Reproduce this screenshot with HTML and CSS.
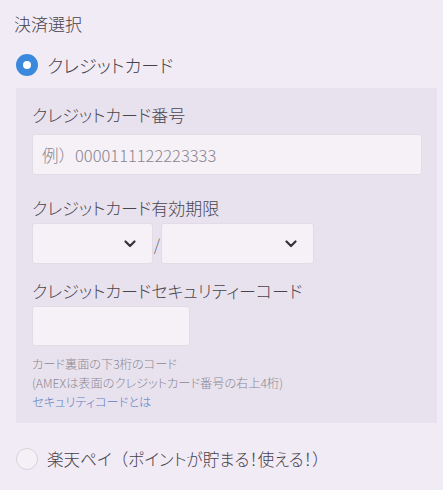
FILE: index.html
```html
<!DOCTYPE html>
<html lang="ja">
<head>
<meta charset="utf-8">
<link rel="stylesheet" href="styles.css">
</head>
<body>
<div class="page">
  <h2 class="title">決済選択</h2>
  <label class="radio-row">
    <span class="radio checked"></span>
    <span class="radio-text">クレジットカード</span>
  </label>
  <div class="panel">
    <div class="field-label">クレジットカード番号</div>
    <div class="input wide"><span class="placeholder">例）0000111122223333</span></div>

    <div class="field-label gap">クレジットカード有効期限</div>
    <div class="expiry">
      <div class="select month">
        <svg class="chev" width="12" height="8" viewBox="0 0 12 8"><path d="M1.5 1.5 L6 6 L10.5 1.5" fill="none" stroke="#35323a" stroke-width="2.2" stroke-linecap="round" stroke-linejoin="round"/></svg>
      </div>
      <span class="slash">/</span>
      <div class="select year">
        <svg class="chev" width="12" height="8" viewBox="0 0 12 8"><path d="M1.5 1.5 L6 6 L10.5 1.5" fill="none" stroke="#35323a" stroke-width="2.2" stroke-linecap="round" stroke-linejoin="round"/></svg>
      </div>
    </div>

    <div class="field-label gap2">クレジットカードセキュリティーコード</div>
    <div class="input short"></div>

    <div class="help">
      <div>カード裏面の下3桁のコード</div>
      <div>(AMEXは表面のクレジットカード番号の右上4桁)</div>
      <div class="link">セキュリティコードとは</div>
    </div>
  </div>
  <label class="radio-row second">
    <span class="radio"></span>
    <span class="radio-text small">楽天ペイ<span class="fw">（</span>ポイントが貯まる！使える！<span class="fw">）</span></span>
  </label>
</div>
</body>
</html>
```

FILE: styles.css
```css
html, body {
  margin: 0;
  padding: 0;
  background: #f1ebf5;
}
body {
  font-family: "Noto Sans CJK JP", "Noto Sans", sans-serif;
  font-feature-settings: "palt";
  font-weight: 300;
  color: #47434c;
  width: 443px;
  height: 490px;
  overflow: hidden;
}
.page {
  padding: 12px 6px 0 14px;
}
.title {
  margin: 0;
  font-size: 17px;
  font-weight: 300;
  line-height: 24px;
  color: #45414a;
}
.radio-row {
  display: flex;
  align-items: center;
  gap: 9px;
  margin-top: 16px;
  height: 26px;
}
.radio {
  width: 22px;
  height: 22px;
  border-radius: 50%;
  box-sizing: border-box;
  border: 1px solid #d8d2dc;
  background: #f4f0f6;
  flex: none;
  margin-left: 2px;
}
.radio.checked {
  border: 7px solid #3b89dd;
  background: #ffffff;
}
.radio-text {
  font-size: 18px;
  line-height: 26px;
  color: #45414a;
}
.radio-text.small {
  font-size: 16.6px;
}
.fw {
  font-feature-settings: normal;
}
.panel {
  margin: 10px 0 0 2px;
  width: 421px;
  box-sizing: border-box;
  background: #e8e2ee;
  padding: 15px 15px 11px 16px;
}
.field-label {
  font-size: 17px;
  line-height: 24px;
  color: #4a4650;
}
.field-label.gap { margin-top: 21px; }
.field-label.gap2 { margin-top: 15px; }
.input, .select {
  box-sizing: border-box;
  background: #f5f1f7;
  border: 1px solid #e2dce7;
  border-radius: 3px;
  height: 41px;
}
.input.wide {
  margin-top: 7px;
  width: 390px;
  display: flex;
  align-items: center;
  padding-left: 9px;
}
.placeholder {
  font-size: 16.5px;
  font-feature-settings: normal;
  color: #8a858f;
}
.input.short {
  margin-top: 3px;
  width: 158px;
  height: 40px;
}
.expiry {
  display: flex;
  align-items: center;
  margin-top: 3px;
}
.select {
  display: flex;
  align-items: center;
  justify-content: flex-end;
}
.select.month { width: 121px; padding-right: 16px; }
.select.year { width: 153px; padding-right: 16px; }
.slash {
  width: 8px;
  text-align: center;
  font-size: 16px;
  color: #6a6570;
  line-height: 1;
}
.help {
  margin-top: 9px;
  font-size: 12.2px;
  line-height: 19px;
  color: #8d8892;
}
.help .link {
  color: #5a7fc4;
}
.radio-row.second {
  margin-top: 23px;
}
```
